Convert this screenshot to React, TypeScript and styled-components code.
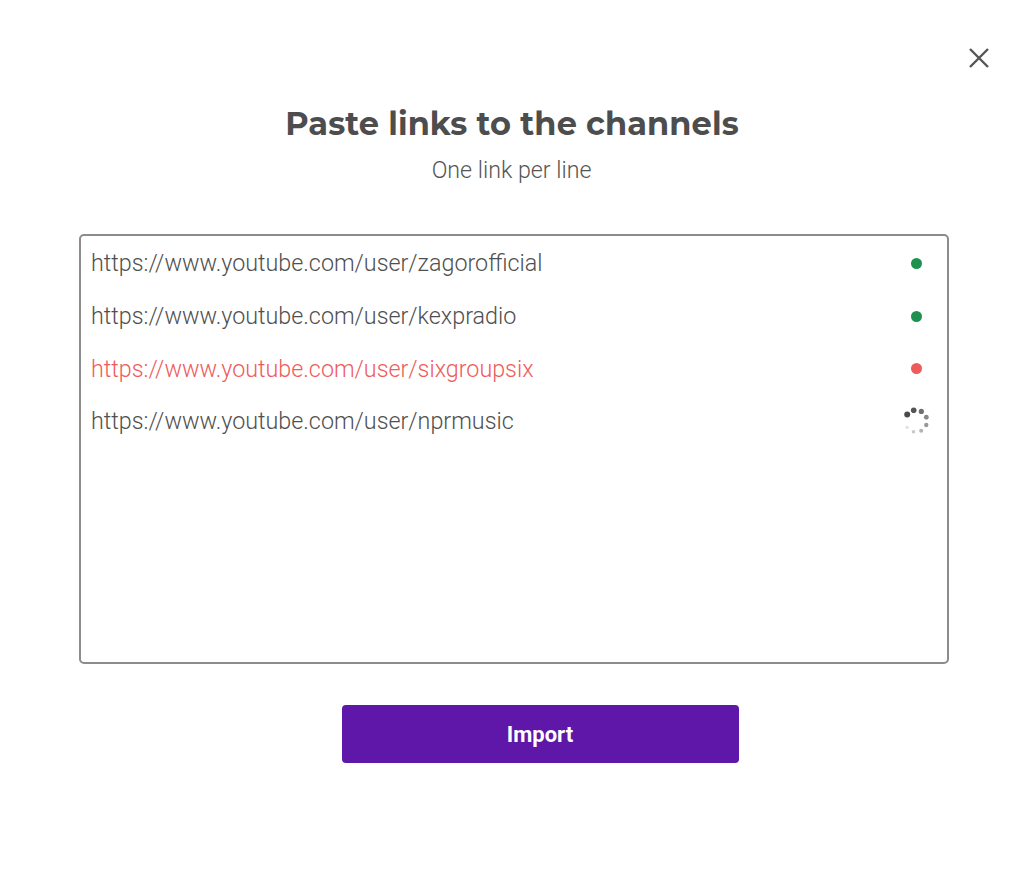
import React from "react";
import styled, { createGlobalStyle } from "styled-components";

const Global = createGlobalStyle`
  html, body { margin: 0; padding: 0; background: #fff; }
  body { font-family: Roboto, "Liberation Sans", sans-serif; }
`;

const Page = styled.div`
  position: relative;
  width: 1016px;
  height: 896px;
  box-sizing: border-box;
  padding: 102px 67px 0 79px;
  display: flex;
  flex-direction: column;
  align-items: center;
`;

const Close = styled.button`
  position: absolute;
  top: 46px;
  right: 25px;
  width: 24px;
  height: 24px;
  border: 0;
  background: none;
  padding: 0;
  cursor: pointer;
  display: flex;
  align-items: center;
  justify-content: center;
`;

const Title = styled.h1`
  margin: 0 4px 0 0;
  font-family: Montserrat, "Open Sans", sans-serif;
  font-weight: 700;
  font-size: 32px;
  line-height: 44px;
  color: #4d4d4d;
  letter-spacing: 0.1px;
`;

const Subtitle = styled.p`
  margin: 12px 5px 0 0;
  font-family: Roboto, sans-serif;
  font-weight: 300;
  font-size: 23.2px;
  line-height: 24px;
  color: #555;
`;

const Box = styled.div`
  margin-top: 52px;
  width: 870px;
  height: 430px;
  box-sizing: border-box;
  border: 2px solid #8c8c8c;
  border-radius: 5px;
  padding: 1px 16px 0 10px;
  display: flex;
  flex-direction: column;
`;

const Row = styled.div`
  display: flex;
  align-items: center;
  justify-content: space-between;
  height: 52.7px;
`;

const Link = styled.span<{ $error?: boolean }>`
  font-family: Roboto, sans-serif;
  font-weight: 300;
  font-size: 23.3px;
  color: ${(p) => (p.$error ? "#ef5b5b" : "#4f4f4f")};
`;

const Dot = styled.span<{ $color: string }>`
  width: 11px;
  height: 11px;
  border-radius: 50%;
  background: ${(p) => p.$color};
  margin-right: 9px;
`;

const Button = styled.button`
  margin-top: 41px;
  margin-left: 52px;
  width: 397px;
  height: 58px;
  border: 0;
  border-radius: 4px;
  background: #5e17a8;
  color: #fff;
  font-family: Roboto, sans-serif;
  font-weight: 700;
  font-size: 22px;
  cursor: pointer;
`;

const Spinner = () => {
  const shades = ["#4a4a4a", "#555", "#6e6e6e", "#888", "#999", "#b3b3b3", "#c8c8c8", "#e0e0e0"];
  const dots = shades.map((shade, i) => {
    const a = (-143 + i * 41) * (Math.PI / 180);
    return (
      <circle
        key={i}
        cx={14 + 11 * Math.cos(a)}
        cy={14 + 11 * Math.sin(a)}
        r={3 - i * 0.2}
        fill={shade}
      />
    );
  });
  return (
    <svg width="28" height="28" viewBox="0 0 28 28" style={{ marginRight: 1 }}>
      {dots}
    </svg>
  );
};

const links = [
  { url: "https://www.youtube.com/user/zagorofficial", status: "ok" },
  { url: "https://www.youtube.com/user/kexpradio", status: "ok" },
  { url: "https://www.youtube.com/user/sixgroupsix", status: "error" },
  { url: "https://www.youtube.com/user/nprmusic", status: "loading" },
];

export default function App() {
  return (
    <>
      <Global />
      <Page>
        <Close aria-label="Close">
          <svg width="22" height="22" viewBox="0 0 22 22">
            <path d="M2 2 L20 20 M20 2 L2 20" stroke="#555" strokeWidth="2.4" />
          </svg>
        </Close>
        <Title>Paste links to the channels</Title>
        <Subtitle>One link per line</Subtitle>
        <Box>
          {links.map((l) => (
            <Row key={l.url}>
              <Link $error={l.status === "error"}>{l.url}</Link>
              {l.status === "ok" && <Dot $color="#1e9150" />}
              {l.status === "error" && <Dot $color="#ef5b5b" />}
              {l.status === "loading" && <Spinner />}
            </Row>
          ))}
        </Box>
        <Button>Import</Button>
      </Page>
    </>
  );
}
